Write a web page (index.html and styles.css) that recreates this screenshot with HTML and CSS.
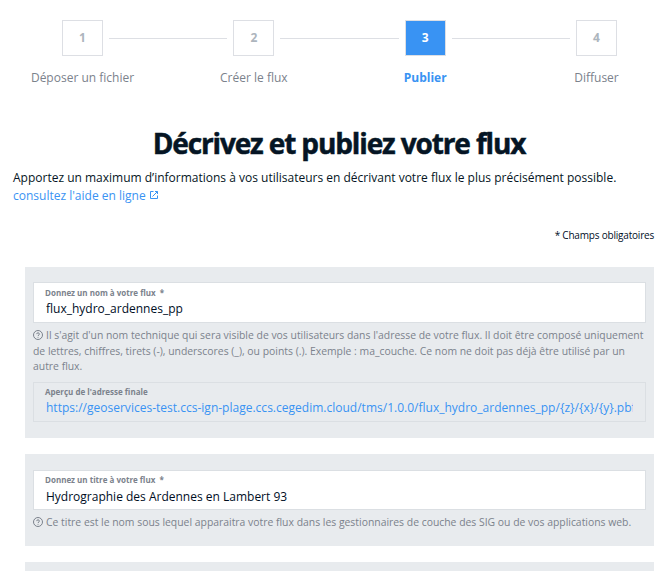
FILE: index.html
```html
<!DOCTYPE html>
<html lang="fr">
<head>
<meta charset="utf-8">
<title>Décrivez et publiez votre flux</title>
<link rel="stylesheet" href="styles.css">
</head>
<body>
<nav class="stepper">
  <span class="step-number">1</span><span class="step-line"></span>
  <span class="step-number">2</span><span class="step-line"></span>
  <span class="step-number active">3</span><span class="step-line"></span>
  <span class="step-number">4</span>
  <span class="step-label first">Déposer un fichier</span>
  <span class="step-label second">Créer le flux</span>
  <span class="step-label third active">Publier</span>
  <span class="step-label fourth">Diffuser</span>
</nav>
<main>
  <h1>Décrivez et publiez votre flux</h1>
  <p class="intro">Apportez un maximum d’informations à vos utilisateurs en décrivant votre flux le plus précisément possible.<br>
    <a class="help-link" href="#">consultez l'aide en ligne<svg class="external" viewBox="0 0 10 10"><path d="M4.5 1.5h-3v7h7v-3M6 1.5h2.5V4M8.5 1.5l-5 5"/></svg></a></p>
  <p class="required">* Champs obligatoires</p>

  <section class="card name-card">
    <div class="field name-field">
      <label class="label">Donnez un nom à votre flux &nbsp;*</label>
      <div class="value">flux_hydro_ardennes_pp</div>
    </div>
    <p class="hint"><svg class="question" viewBox="0 0 10 10"><circle cx="5" cy="5" r="4.5"/><path d="M3.7 4.1c0-1.8 2.7-1.7 2.7 0C6.4 5 5 5 5 6M5 6.9v.8"/></svg>Il s'agit d'un nom technique qui sera visible de vos utilisateurs dans l'adresse de votre flux. Il doit être composé uniquement<br>de lettres, chiffres, tirets (-), underscores (_), ou points (.). Exemple : ma_couche. Ce nom ne doit pas déjà être utilisé par un<br>autre flux.</p>
    <div class="field preview">
      <label class="label">Aperçu de l'adresse finale</label>
      <div class="value url">https://geoservices-test.ccs-ign-plage.ccs.cegedim.cloud/tms/1.0.0/flux_hydro_ardennes_pp/{z}/{x}/{y}.pbf</div>
    </div>
  </section>

  <section class="card">
    <div class="field">
      <label class="label">Donnez un titre à votre flux &nbsp;*</label>
      <div class="value title-value">Hydrographie des Ardennes en Lambert 93</div>
    </div>
    <p class="hint single"><svg class="question" viewBox="0 0 10 10"><circle cx="5" cy="5" r="4.5"/><path d="M3.7 4.1c0-1.8 2.7-1.7 2.7 0C6.4 5 5 5 5 6M5 6.9v.8"/></svg>Ce titre est le nom sous lequel apparaitra votre flux dans les gestionnaires de couche des SIG ou de vos applications web.</p>
  </section>

  <section class="card next"></section>
</main>
</body>
</html>
```

FILE: styles.css
```css
* { box-sizing: border-box; }
body {
  margin: 0;
  height: 571px;
  overflow: hidden;
  background: #fff;
  color: #0b1929;
  font-family: "Open Sans", sans-serif;
  font-size: 12px;
}
h1, p { margin: 0; }
.stepper {
  display: grid;
  grid-template-columns: 41px 1fr 41px 1fr 41px 1fr 41px;
  grid-template-rows: 36px 18px;
  row-gap: 13px;
  padding: 20px 51px 0 62px;
}
.step-number {
  border: 1px solid #dddfe4;
  color: #adb5bd;
  font-weight: 700;
  line-height: 34px;
  text-align: center;
}
.step-number.active { background: #3993f3; color: #fff; }
.step-line { height: 1px; margin: 18px 6px 0; background: #dddfe4; }
.step-label {
  grid-row: 2;
  justify-self: center;
  white-space: nowrap;
  line-height: 18px;
  color: #7b828c;
}
.step-label.active { color: #3993f3; font-weight: 700; }
.first { grid-column: 1; }
.second { grid-column: 3; }
.third { grid-column: 5; }
.fourth { grid-column: 7; }
main { height: 484px; overflow: hidden; padding: 38px 14px 0 13px; }
h1 {
  height: 44px;
  padding-left: 11px;
  text-align: center;
  font-size: 28px;
  line-height: 36px;
  white-space: nowrap;
  letter-spacing: -1.13px;
  color: #051524;
  -webkit-text-stroke: 0.5px #051524;
}
.intro { line-height: 18px; white-space: nowrap; color: #051524; }
.help-link { color: #3993f3; text-decoration: none; }
.external { width: 10px; height: 10px; margin-left: 3px; fill: none; stroke: #3993f3; stroke-width: 1; }
.required { margin-top: 21px; line-height: 18px; text-align: right; font-size: 10px; letter-spacing: -0.2px; color: #000e1f; }
.card {
  margin: 16px 0 0 12px;
  padding: 16px 8px;
  background: #e8ebee;
}
.name-card { margin-top: 23px; padding-top: 15px; }
.field {
  height: 40px;
  padding: 3px 12px 0 11px;
  border: 1px solid #dbdfe3;
  background: #fff;
}
.name-field { height: 41px; padding-top: 4px; }
.label {
  display: block;
  font-size: 8px;
  font-weight: 700;
  line-height: 11px;
  color: #7b828c;
}
.value {
  margin-left: 1px;
  line-height: 18px;
  margin-top: 2px;
  overflow: hidden;
  white-space: nowrap;
  color: #000e1f;
}
.title-value { margin-top: 3px; }
.hint {
  height: 47px;
  margin-top: 5px;
  font-size: 10.4px;
  line-height: 15.6px;
  white-space: nowrap;
  color: #7b828c;
}
.single { height: 15px; }
.question { width: 10px; height: 10px; margin-right: 3px; vertical-align: -1px; fill: none; stroke: #7b828c; stroke-width: 1; }
.preview { margin-top: 7px; background: transparent; }
.url { color: #3993f3; letter-spacing: 0.008px; }
.next { height: 40px; }
```
